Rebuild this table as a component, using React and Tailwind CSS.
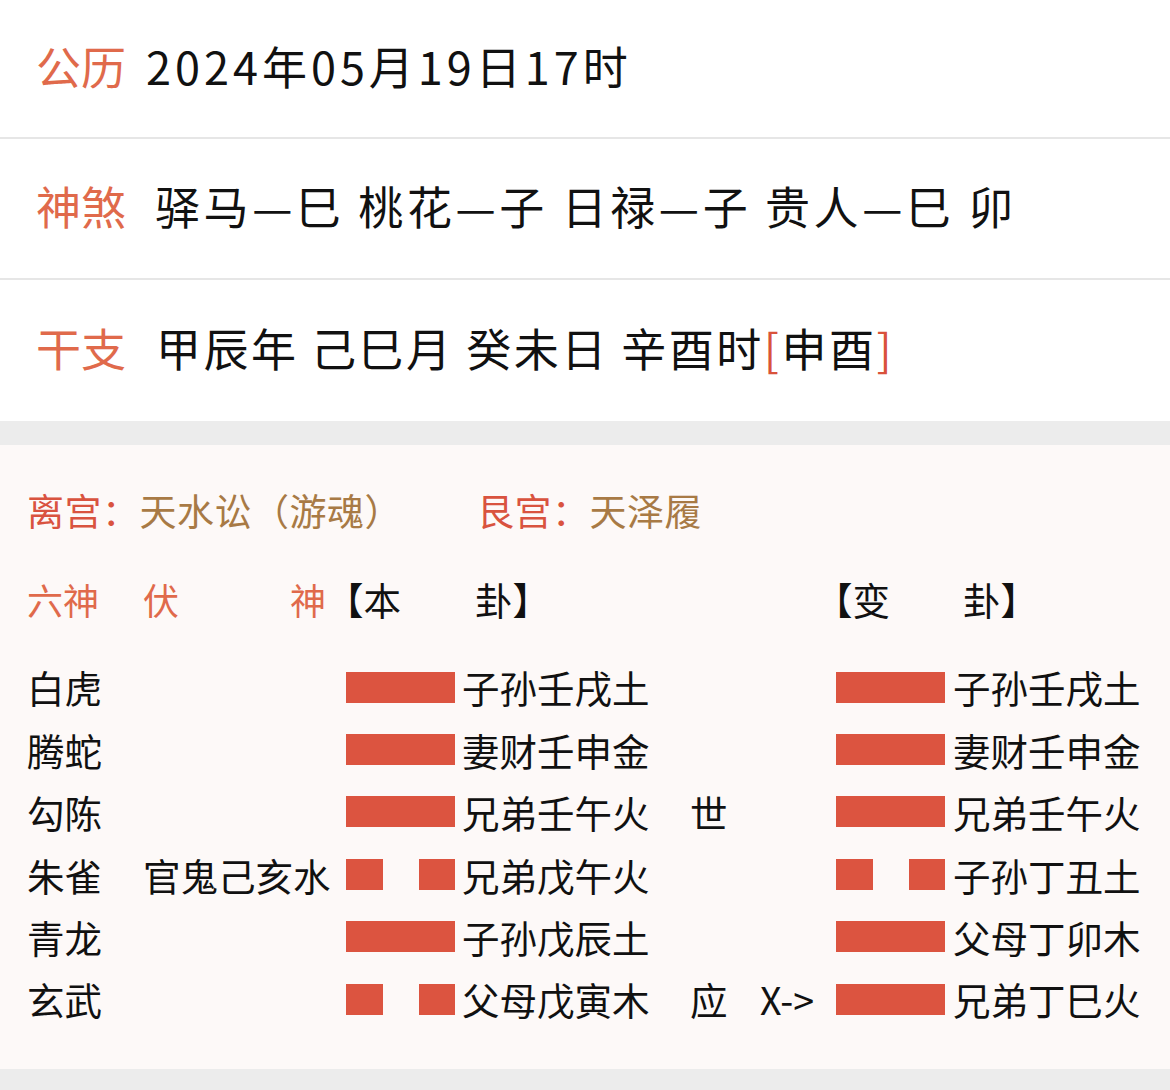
import React from 'react';

const rows = [
  { god: '白虎', fu: '', ben: true, benText: '子孙壬戌土', mark: '', move: '', bian: true, bianText: '子孙壬戌土' },
  { god: '腾蛇', fu: '', ben: true, benText: '妻财壬申金', mark: '', move: '', bian: true, bianText: '妻财壬申金' },
  { god: '勾陈', fu: '', ben: true, benText: '兄弟壬午火', mark: '世', move: '', bian: true, bianText: '兄弟壬午火' },
  { god: '朱雀', fu: '官鬼己亥水', ben: false, benText: '兄弟戊午火', mark: '', move: '', bian: false, bianText: '子孙丁丑土' },
  { god: '青龙', fu: '', ben: true, benText: '子孙戊辰土', mark: '', move: '', bian: true, bianText: '父母丁卯木' },
  { god: '玄武', fu: '', ben: false, benText: '父母戊寅木', mark: '应', move: 'X->', bian: true, bianText: '兄弟丁巳火' },
];

function Yao({ yang }) {
  if (yang) {
    return <div className="h-[31px] w-[109px] bg-[#dc5440]" />;
  }
  return (
    <div className="flex h-[31px] w-[109px] justify-between">
      <div className="w-[37px] bg-[#dc5440]" />
      <div className="w-[36px] bg-[#dc5440]" />
    </div>
  );
}

function InfoRow({ label, height, gap, children }) {
  return (
    <div className={`flex items-center bg-white pb-[6px] pl-[36px] ${height}`}>
      <span className="text-[45px] leading-none text-[#e06a4b]">{label}</span>
      <span className={`text-[45px] leading-none text-[#111] ${gap}`}>{children}</span>
    </div>
  );
}

export default function App() {
  return (
    <div className="w-[1170px] bg-[#ececec] font-['Noto_Sans_CJK_SC',sans-serif]">
      {/* 基本信息 */}
      <InfoRow label="公历" height="h-[137px]" gap="ml-[20px] tracking-[4px]">
        2024年05月19日17时
      </InfoRow>
      <div className="h-[2px] bg-[#e6e6e6]" />
      <InfoRow label="神煞" height="h-[139px]" gap="ml-[29px] tracking-[3.6px]">
        驿马—巳 桃花—子 日禄—子 贵人—巳 卯
      </InfoRow>
      <div className="h-[2px] bg-[#e6e6e6]" />
      <InfoRow label="干支" height="h-[141px]" gap="ml-[30px] tracking-[2.5px]">
        甲辰年 己巳月 癸未日 辛酉时<span className="text-[#d9523b]">[</span>申酉<span className="text-[#d9523b]">]</span>
      </InfoRow>

      <div className="h-[24px]" />

      {/* 卦象 */}
      <div className="bg-[#fdf9f8] pl-[27px] pt-[40px] pb-[39px] text-[37.5px] leading-none">
        <div className="flex h-[50px] items-center text-[37px] tracking-[0.5px]">
          <span className="text-[#d9533f]">离宫：</span>
          <span className="text-[#a87a45]">天水讼（游魂）</span>
          <span className="ml-[75px] text-[#d9533f]">艮宫：</span>
          <span className="text-[#a87a45]">天泽履</span>
        </div>

        <div className="mt-[33px] flex h-[62px] items-center">
          <span className="w-[116px] text-[36px] text-[#e06a4b]">六神</span>
          <div className="flex w-[183px] justify-between text-[36px] text-[#e06a4b]">
            <span>伏</span>
            <span>神</span>
          </div>
          <span className="w-[149px] text-[#111]">【本</span>
          <span className="w-[340px] text-[#111]">卦】</span>
          <span className="w-[148px] text-[#111]">【变</span>
          <span className="text-[#111]">卦】</span>
        </div>

        <div className="mt-[26px] flex flex-col">
          {rows.map((r) => (
            <div key={r.god} className="flex h-[62.4px] items-center text-[#111]">
              <span className="w-[116px]">{r.god}</span>
              <span className="w-[203px]">{r.fu}</span>
              <Yao yang={r.ben} />
              <span className="ml-[7px] w-[228px]">{r.benText}</span>
              <span className="w-[70px]">{r.mark}</span>
              <span className="w-[76px]">{r.move}</span>
              <Yao yang={r.bian} />
              <span className="ml-[8px]">{r.bianText}</span>
            </div>
          ))}
        </div>
      </div>

      <div className="h-[22px]" />
    </div>
  );
}
